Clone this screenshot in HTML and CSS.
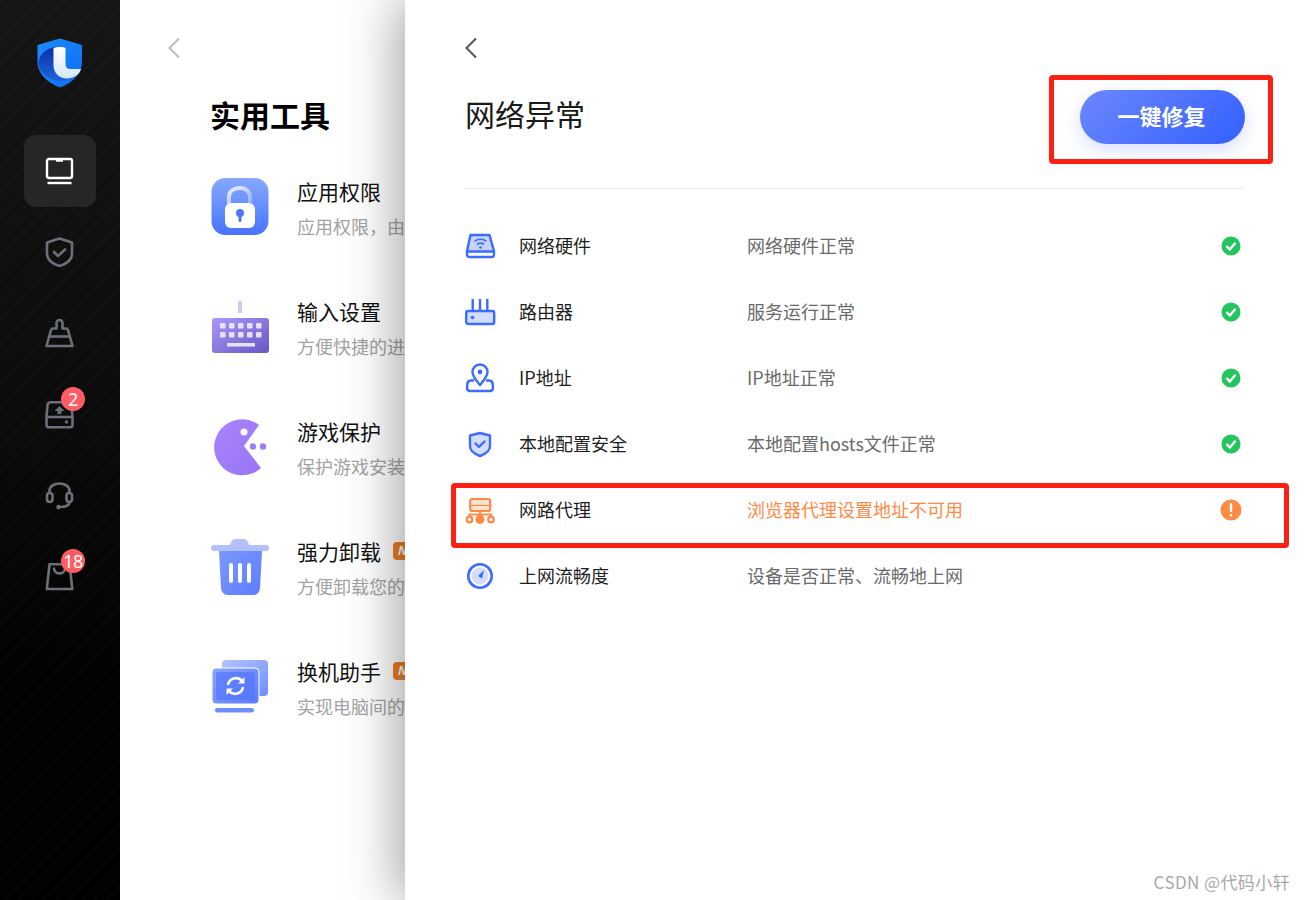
FILE: index.html
```html
<!DOCTYPE html>
<html lang="zh">
<head>
<meta charset="utf-8">
<title>网络异常</title>
<link rel="stylesheet" href="styles.css">
</head>
<body>
<div class="app">
  <aside class="sidebar">
    <div class="logo">
      <svg width="46" height="50" viewBox="0 0 46 50">
        <defs>
          <linearGradient id="lg1" x1="0" y1="0" x2="1" y2="1"><stop offset="0" stop-color="#1a8cff"/><stop offset="1" stop-color="#0f6df0"/></linearGradient>
          <linearGradient id="lg2" x1="0" y1="0" x2="0" y2="1"><stop offset="0" stop-color="#0c2fa8"/><stop offset="1" stop-color="#1c66dc"/></linearGradient>
          <linearGradient id="lg3" x1="0" y1="0" x2="0" y2="1"><stop offset="0" stop-color="#ffffff"/><stop offset="1" stop-color="#d5e6fa"/></linearGradient>
        </defs>
        <path d="M23 0.5 L45 7 V24 C45 37 33 46 23 49.5 C13 46 0.5 37 0.5 24 V7 Z" fill="url(#lg1)"/>
        <path d="M21 9 C10 9 1.500 16 1.500 26 C1.500 33 10 41 20 43 C28 44 36 42 43 34 L30 33 C26 33 21 28 21 22 Z" fill="url(#lg2)"/>
        <path d="M16.500 10 C19 8.500 27 8.500 28.500 10 V26 C28.500 29 30 31 33 31 H44 C43 36 37 40.500 30 40.500 C22 40.500 16.500 35 16.500 27 Z" fill="url(#lg3)"/>
      </svg>
    </div>
    <nav class="nav">
      <div class="nav-item active">
        <svg width="30" height="30" viewBox="0 0 30 30" fill="none" stroke="#fff" stroke-width="2.400"><rect x="2" y="3" width="25" height="19" rx="2"/><path d="M11 4h7" stroke-width="3.400"/><path d="M2.500 27h24" stroke-width="2.400"/></svg>
      </div>
      <div class="nav-item">
        <svg width="30" height="30" viewBox="0 0 30 30" fill="none" stroke="#6b7178" stroke-width="2.600" stroke-linejoin="round" stroke-linecap="round"><path d="M14.500 1.500 L27 5.500 V17 C27 23 20.500 27 14.500 29 C8.500 27 2 23 2 17 V5.500 Z"/><path d="M9 15 L13 19 L20 12.500"/></svg>
      </div>
      <div class="nav-item">
        <svg width="30" height="30" viewBox="0 0 30 30" fill="none" stroke="#6b7178" stroke-width="2.600" stroke-linejoin="round"><path d="M11.500 10.500 V5 a3 3 0 0 1 6 0 V10.500 H21 C22 10.500 22.500 11 23 12 L27.500 28 H1.500 L6 12 C6.500 11 7 10.500 8 10.500 Z"/><path d="M4.500 18.500 H24.500"/></svg>
      </div>
      <div class="nav-item">
        <svg width="30" height="30" viewBox="0 0 30 30" fill="none" stroke="#6b7178" stroke-width="2.600" stroke-linejoin="round"><path d="M5.500 3.300 H23.500 C25 3.300 26 4.300 26.500 6 L27.500 18 V26 C27.500 27.500 26.500 28.300 25 28.300 H4 C2.500 28.300 1.500 27.500 1.500 26 V18 L2.500 6 C3 4.300 4 3.300 5.500 3.300 Z"/><path d="M2 18 H27"/><path d="M14.500 7 L19.500 12 H16.500 V15 H12.500 V12 H9.500 Z" fill="#6b7178" stroke="none"/><circle cx="21.500" cy="23" r="1.700" fill="#6b7178" stroke="none"/></svg>
        <span class="badge">2</span>
      </div>
      <div class="nav-item">
        <svg width="30" height="30" viewBox="0 0 30 30" fill="none" stroke="#6b7178" stroke-width="2.600" stroke-linecap="round"><path d="M4.500 13 V11 C4.500 6 9.500 3.500 14.500 3.500 C19.500 3.500 24.500 6 24.500 11 V13"/><rect x="2" y="13" width="5.500" height="9" rx="2.700"/><rect x="21.500" y="13" width="5.500" height="9" rx="2.700"/><path d="M24.500 22 C24.500 25.500 20.500 27 14 27"/><circle cx="13.500" cy="27" r="2.200" fill="#6b7178" stroke="none"/></svg>
      </div>
      <div class="nav-item">
        <svg width="30" height="30" viewBox="0 0 30 30" fill="none" stroke="#6b7178" stroke-width="2.600" stroke-linejoin="round" stroke-linecap="round"><path d="M4.500 3.300 H24.500 L27.300 28 H1.800 Z"/><path d="M9 7.500 C9.500 14 19.500 14 20 7.500"/></svg>
        <span class="badge">18</span>
      </div>
    </nav>
  </aside>

  <section class="tools">
    <svg class="back" width="14" height="22" viewBox="0 0 14 22" fill="none" stroke="#bdbdbd" stroke-width="2"><path d="M12 1.500 L2.500 11 L12 20.500"/></svg>
    <h1 class="tools-title">实用工具</h1>
    <ul class="tool-list">
      <li class="tool">
        <svg class="tool-icon" width="60" height="60" viewBox="0 0 60 60">
          <defs>
            <linearGradient id="t1" x1="0" y1="0" x2="0" y2="1"><stop offset="0" stop-color="#85a9ff"/><stop offset="1" stop-color="#4873ff"/></linearGradient>
            <linearGradient id="t1b" x1="0" y1="0" x2="1" y2="1"><stop offset="0" stop-color="#fff" stop-opacity=".85"/><stop offset="1" stop-color="#fff" stop-opacity=".25"/></linearGradient>
          </defs>
          <rect x="1.500" width="57" height="57" rx="14" fill="url(#t1)"/>
          <path d="M19 27 V19 C19 13 24 10 30 10 C36 10 40 14 40 20 V25" fill="none" stroke="url(#t1b)" stroke-width="4"/>
          <rect x="15" y="25" width="30" height="25" rx="6" fill="#fff"/>
          <circle cx="30" cy="35" r="4" fill="#4c76ff"/>
          <rect x="28.500" y="35" width="3" height="9" rx="1.500" fill="#4c76ff"/>
        </svg>
        <div class="tool-text">
          <div class="tool-name">应用权限</div>
          <div class="tool-desc">应用权限，由您自主授权管理</div>
        </div>
      </li>
      <li class="tool">
        <svg class="tool-icon" width="60" height="60" viewBox="0 0 60 60">
          <defs><linearGradient id="t2" x1="0" y1="0" x2="1" y2="1"><stop offset="0" stop-color="#ab98f8"/><stop offset="1" stop-color="#6558c4"/></linearGradient></defs>
          <rect x="28" y="3" width="4" height="12" fill="#cfcbf7"/>
          <rect x="2" y="20" width="57" height="35" rx="3" fill="url(#t2)"/>
          <g fill="#e6e2fd"><rect x="10" y="25" width="5.500" height="5.500" rx="1"/><rect x="19" y="25" width="5.500" height="5.500" rx="1"/><rect x="28" y="25" width="5.500" height="5.500" rx="1"/><rect x="37" y="25" width="5.500" height="5.500" rx="1"/><rect x="46" y="25" width="5.500" height="5.500" rx="1"/><rect x="10" y="34" width="5.500" height="5.500" rx="1"/><rect x="19" y="34" width="5.500" height="5.500" rx="1"/><rect x="28" y="34" width="5.500" height="5.500" rx="1"/><rect x="37" y="34" width="5.500" height="5.500" rx="1"/><rect x="46" y="34" width="5.500" height="5.500" rx="1"/><rect x="17" y="45" width="28" height="3.500"/></g>
        </svg>
        <div class="tool-text">
          <div class="tool-name">输入设置</div>
          <div class="tool-desc">方便快捷的进行输入设置</div>
        </div>
      </li>
      <li class="tool">
        <svg class="tool-icon" width="60" height="60" viewBox="0 0 60 60">
          <defs><linearGradient id="t3" x1="0" y1="0" x2="1" y2="1"><stop offset="0" stop-color="#a884ff"/><stop offset="1" stop-color="#9a74f5"/></linearGradient></defs>
          <path d="M49 7 A28 28 0 1 0 51 50 L34 28 Z" fill="url(#t3)"/>
          <circle cx="34" cy="14" r="3.500" fill="#fff"/>
          <circle cx="43" cy="28.500" r="3.200" fill="#9f7bfa"/>
          <circle cx="53" cy="28.500" r="3.200" fill="#9f7bfa"/>
        </svg>
        <div class="tool-text">
          <div class="tool-name">游戏保护</div>
          <div class="tool-desc">保护游戏安装目录和运行</div>
        </div>
      </li>
      <li class="tool">
        <svg class="tool-icon" width="60" height="60" viewBox="0 0 60 60">
          <defs><linearGradient id="t4" x1="0" y1="0" x2="1" y2="1"><stop offset="0" stop-color="#7b98ff"/><stop offset="1" stop-color="#5d7dff"/></linearGradient></defs>
          <path d="M20 7 C21 3 23 1 25 1 H34 C36 1 38 3 39 7 H56 A3 3 0 0 1 56 13 H4 A3 3 0 0 1 4 7 Z" fill="#b2c0ff"/>
          <path d="M9 13 H52 L50 50 C49.500 54 47 57 44 57 H17 C14 57 11.500 54 11 50 Z" fill="url(#t4)"/>
          <rect x="19" y="25" width="4" height="20" rx="2" fill="#fff"/><rect x="28" y="25" width="4" height="20" rx="2" fill="#fff"/><rect x="37" y="25" width="4" height="20" rx="2" fill="#fff"/>
        </svg>
        <div class="tool-text">
          <div class="tool-name">强力卸载<span class="new">NEW</span></div>
          <div class="tool-desc">方便卸载您的电脑软件</div>
        </div>
      </li>
      <li class="tool">
        <svg class="tool-icon" width="60" height="60" viewBox="0 0 60 60">
          <defs><linearGradient id="t5" x1="0" y1="0" x2="1" y2="1"><stop offset="0" stop-color="#8aa5ff"/><stop offset="1" stop-color="#5a7cff"/></linearGradient><linearGradient id="t5b" x1="0" y1="0" x2="1" y2="1"><stop offset="0" stop-color="#b4c4ff"/><stop offset="1" stop-color="#6f8dff"/></linearGradient></defs>
          <rect x="12" y="2" width="46" height="36" rx="4" fill="url(#t5b)"/>
          <rect x="2" y="10" width="47" height="36" rx="4" fill="url(#t5)" stroke="#fff"/>
          <rect x="6" y="14" width="39" height="28" rx="2" fill="#4c71ff" opacity=".6"/>
          <path d="M18 27 A8 8 0 0 1 32 23 M33 29 A8 8 0 0 1 19 33" fill="none" stroke="#fff" stroke-width="2.500"/>
          <path d="M34.500 19 V25.500 H28 Z M16.500 37 V30.500 H23 Z" fill="#fff"/>
          <rect x="5" y="50" width="39" height="4.500" rx="2.200" fill="#6f8dff"/>
        </svg>
        <div class="tool-text">
          <div class="tool-name">换机助手<span class="new">NEW</span></div>
          <div class="tool-desc">实现电脑间的数据迁移</div>
        </div>
      </li>
    </ul>
  </section>

  <main class="panel">
    <svg class="back" width="14" height="22" viewBox="0 0 14 22" fill="none" stroke="#555" stroke-width="2"><path d="M12 1.500 L2.500 11 L12 20.500"/></svg>
    <header class="panel-head">
      <h2 class="panel-title">网络异常</h2>
      <button class="fix"><span class="fix-label">一键修复</span></button>
    </header>
    <ul class="checks">
      <li class="check">
        <svg class="row-icon" width="32" height="30" viewBox="0 0 32 30" fill="none" stroke="#3d6bff" stroke-width="2.400"><path d="M6.500 4 H25.500 L30 20 H3 Z" fill="#c7d4ff" stroke="none"/><path d="M6.500 4 H25.500 L30 20 V23.500 C30 25 29 26 28 26 H5 C4 26 3 25 3 23.500 V20 Z M3 20.500 H30" stroke-linejoin="round"/><path d="M10.500 10.500 C13.500 7.500 19.500 7.500 22.500 10.500 M13 13.500 C15 12 18 12 20 13.500" stroke-width="1.600"/><circle cx="16.500" cy="16.500" r="1.300" fill="#3d6bff" stroke="none"/></svg>
        <span class="check-name">网络硬件</span><span class="check-status">网络硬件正常</span>
        <svg class="ok" width="20" height="20" viewBox="0 0 20 20"><circle cx="10" cy="10" r="9.500" fill="#23c55f"/><path d="M5.500 10 L8.800 13.500 L14.500 6.800" fill="none" stroke="#fff" stroke-width="2.400"/></svg>
      </li>
      <li class="check">
        <svg class="row-icon" width="32" height="30" viewBox="0 0 32 30" fill="none" stroke="#3d6bff" stroke-width="2.400"><path d="M8.700 2 V14 M16 2 V14 M23.300 2 V14"/><rect x="2.200" y="14" width="28" height="13" rx="2" fill="#d3ddff"/><circle cx="8.500" cy="20.500" r="1.800" fill="#3d6bff" stroke="none"/></svg>
        <span class="check-name">路由器</span><span class="check-status">服务运行正常</span>
        <svg class="ok" width="20" height="20" viewBox="0 0 20 20"><circle cx="10" cy="10" r="9.500" fill="#23c55f"/><path d="M5.500 10 L8.800 13.500 L14.500 6.800" fill="none" stroke="#fff" stroke-width="2.400"/></svg>
      </li>
      <li class="check">
        <svg class="row-icon" width="32" height="30" viewBox="0 0 32 30" fill="none" stroke="#3d6bff" stroke-width="2.400" stroke-linejoin="round"><path d="M16 22 C12 17 8.500 13.500 8.500 9 A7.500 7.500 0 0 1 23.500 9 C23.500 13.500 20 17 16 22 Z"/><circle cx="16" cy="9" r="2.400" fill="#3d6bff" stroke="none"/><path d="M10 17.500 H7 C5 17.500 4 18.500 3.500 20 L3 24.500 C3 27 4 28 6 28 H26 C28 28 29 27 29 24.500 L28.500 20 C28 18.500 27 17.500 25 17.500 H22"/></svg>
        <span class="check-name">IP地址</span><span class="check-status">IP地址正常</span>
        <svg class="ok" width="20" height="20" viewBox="0 0 20 20"><circle cx="10" cy="10" r="9.500" fill="#23c55f"/><path d="M5.500 10 L8.800 13.500 L14.500 6.800" fill="none" stroke="#fff" stroke-width="2.400"/></svg>
      </li>
      <li class="check">
        <svg class="row-icon" width="32" height="30" viewBox="0 0 32 30" fill="none" stroke="#3d6bff" stroke-width="2.400" stroke-linejoin="round"><path d="M16 4 L26 6.500 V17 C26 22 21.500 25 16 27 C10.500 25 6 22 6 17 V6.500 Z" fill="#d3ddff"/><path d="M11.500 14.500 L15 18 L20.500 12.500" stroke-linecap="round"/></svg>
        <span class="check-name">本地配置安全</span><span class="check-status">本地配置hosts文件正常</span>
        <svg class="ok" width="20" height="20" viewBox="0 0 20 20"><circle cx="10" cy="10" r="9.500" fill="#23c55f"/><path d="M5.500 10 L8.800 13.500 L14.500 6.800" fill="none" stroke="#fff" stroke-width="2.400"/></svg>
      </li>
      <li class="check warn">
        <svg class="row-icon" width="32" height="30" viewBox="0 0 32 30" fill="none" stroke="#ff8a45" stroke-width="2.200"><rect x="6.200" y="4" width="20" height="12" rx="2" fill="#ffe3d0"/><path d="M7 10.500 H26" stroke-width="1.200"/><path d="M16 16 V23 M5.500 21.500 V19.500 H27 V21.500"/><circle cx="5.500" cy="24.500" r="2.800"/><circle cx="27" cy="24.500" r="2.800"/><circle cx="16" cy="24.500" r="3.500" fill="#ff8a45"/></svg>
        <span class="check-name">网路代理</span><span class="check-status">浏览器代理设置地址不可用</span>
        <svg class="ok big" width="22" height="22" viewBox="0 0 22 22"><circle cx="11" cy="11" r="10.500" fill="#ff8a45"/><rect x="9.800" y="4" width="2.400" height="9" rx="1" fill="#fff"/><rect x="9.800" y="15" width="2.400" height="2.600" rx="1" fill="#fff"/></svg>
      </li>
      <li class="check">
        <svg class="row-icon" width="32" height="30" viewBox="0 0 32 30" fill="none" stroke="#3d6bff" stroke-width="2.600"><circle cx="16" cy="15" r="11.700"/><circle cx="16" cy="15" r="8.500" fill="#d3ddff" stroke="none"/><path d="M20 9 L18 17.500 L14 15 Z" fill="#3d6bff" stroke="none"/></svg>
        <span class="check-name">上网流畅度</span><span class="check-status">设备是否正常、流畅地上网</span>
      </li>
    </ul>
  </main>
</div>
<div class="mark mark-btn"></div>
<div class="mark mark-row"></div>
<div class="watermark">CSDN @代码小轩</div>
</body>
</html>
```
FILE: styles.css
```css
* { box-sizing: border-box; }
html, body { margin: 0; padding: 0; }
body {
  width: 1305px;
  height: 900px;
  overflow: hidden;
  position: relative;
  background: #fff;
  font-family: "Noto Sans CJK SC", "Noto Sans", sans-serif;
}
ul { list-style: none; margin: 0; padding: 0; }
h1, h2 { margin: 0; }

.app { display: flex; height: 900px; }

/* sidebar */
.sidebar {
  width: 120px;
  flex: none;
  padding: 38px 24px 0;
  background:
    repeating-linear-gradient(135deg, rgba(255,255,255,.018) 0 2px, transparent 2px 9px),
    linear-gradient(180deg, #151515 0%, #0b0b0b 45%, #000 80%);
}
.logo { display: flex; justify-content: center; height: 50px; margin-bottom: 47px; }
.nav { display: flex; flex-direction: column; gap: 9px; }
.nav-item {
  position: relative;
  width: 72px;
  height: 72px;
  border-radius: 12px;
  display: flex;
  align-items: center;
  justify-content: center;
}
.nav-item.active { background: #262626; }
.badge {
  position: absolute;
  left: 37px;
  top: 9px;
  width: 24px;
  height: 24px;
  border-radius: 50%;
  background: #ff5d63;
  color: #fff;
  font-size: 18px;
  line-height: 24px;
  text-align: center;
  letter-spacing: -.5px;
  font-family: "Noto Sans", sans-serif;
}

/* tools */
.tools {
  width: 285px;
  flex: none;
  padding: 37px 0 0 47px;
  overflow: hidden;
  background: #fff;
}
.back { display: block; }
.tools-title {
  margin: 35px 0 0 43px;
  height: 40px;
  font-size: 30px;
  line-height: 40px;
  font-weight: 700;
  color: #000;
}
.tool-list { margin: 44px 0 0 43px; }
.tool {
  display: flex;
  height: 120px;
  white-space: nowrap;
}
.tool-icon { flex: none; margin-right: 27px; }
.tool-text { margin-top: -2px; }
.tool-name {
  font-size: 21px;
  line-height: 30px;
  color: #111;
  display: flex;
  align-items: center;
}
.tool-desc {
  margin-top: 5px;
  font-size: 18px;
  line-height: 30px;
  color: #a3a3a3;
}
.new {
  margin-left: 12px;
  height: 18px;
  padding: 0 5px;
  border-radius: 4px 4px 0 4px;
  background: #ee7f26;
  color: #fff;
  font-size: 12px;
  line-height: 18px;
  font-style: italic;
  font-weight: 700;
  font-family: "Noto Sans", sans-serif;
}

/* panel */
.panel {
  position: relative;
  flex: none;
  width: 900px;
  padding: 37px 60px 0 59px;
  background: #fff;
  box-shadow: -6px 0 50px rgba(0,0,0,.38);
}
.panel-head {
  margin-top: 31px;
  height: 99px;
  padding-bottom: 44px;
  display: flex;
  align-items: center;
  justify-content: space-between;
  border-bottom: 1px solid #eeeeee;
}
.panel-title {
  margin-left: 1px;
  padding-bottom: 8px;
  font-size: 30px;
  font-weight: 400;
  color: #1a1a1a;
}
.fix {
  width: 165px;
  height: 54px;
  border: 0;
  border-radius: 27px;
  background: linear-gradient(135deg, #6c87ff, #3360ff);
  box-shadow: 0 6px 18px rgba(70,100,255,.22);
  color: #fff;
  font-family: inherit;
  font-size: 22px;
  font-weight: 700;
  padding: 0 2px 4px 0;
}
.fix-label { display: block; }
.checks { margin-top: 24px; }
.check {
  display: grid;
  grid-template-columns: 55px 228px 1fr 20px;
  align-items: center;
  height: 66px;
  padding-right: 4px;
  font-size: 18px;
}
.row-icon { margin-right: -2px; }
.check-name { color: #1f1f1f; padding-bottom: 2px; }
.check-status { color: #6a6a6a; padding-bottom: 2px; }
.warn .check-status { color: #ff8a45; }
.ok { justify-self: center; }
.big { margin: 0 -1px; }

/* annotations */
.mark {
  position: absolute;
  border: 5px solid #ff1f12;
  border-radius: 4px;
}
.mark-btn { left: 1049px; top: 75px; width: 224px; height: 89px; }
.mark-row { left: 451px; top: 483px; width: 838px; height: 65px; }
.watermark {
  position: absolute;
  right: 15px;
  bottom: 6px;
  font-size: 17px;
  letter-spacing: .4px;
  line-height: 24px;
  color: #a8a8a8;
}
```
